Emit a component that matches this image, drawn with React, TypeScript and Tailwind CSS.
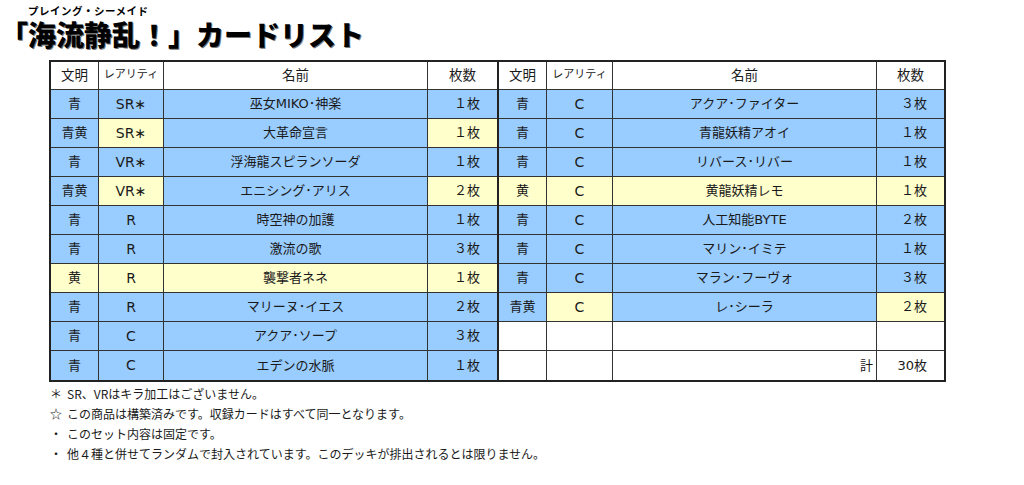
const BLUE = "bg-[#99ccff]";
const YELLOW = "bg-[#ffffcc]";

type Row = {
  civ: string;
  rarity: string;
  name: string;
  count: string;
  tone: "blue" | "yellow" | "mixed" | "none";
};

const leftRows: Row[] = [
  { civ: "青", rarity: "SR∗", name: "巫女MIKO･神楽", count: "１枚", tone: "blue" },
  { civ: "青黄", rarity: "SR∗", name: "大革命宣言", count: "１枚", tone: "mixed" },
  { civ: "青", rarity: "VR∗", name: "浮海龍スピランソーダ", count: "１枚", tone: "blue" },
  { civ: "青黄", rarity: "VR∗", name: "エニシング･アリス", count: "２枚", tone: "mixed" },
  { civ: "青", rarity: "R", name: "時空神の加護", count: "１枚", tone: "blue" },
  { civ: "青", rarity: "R", name: "激流の歌", count: "３枚", tone: "blue" },
  { civ: "黄", rarity: "R", name: "襲撃者ネネ", count: "１枚", tone: "yellow" },
  { civ: "青", rarity: "R", name: "マリーヌ･イエス", count: "２枚", tone: "blue" },
  { civ: "青", rarity: "C", name: "アクア･ソープ", count: "３枚", tone: "blue" },
  { civ: "青", rarity: "C", name: "エデンの水脈", count: "１枚", tone: "blue" },
];

const rightRows: Row[] = [
  { civ: "青", rarity: "C", name: "アクア･ファイター", count: "３枚", tone: "blue" },
  { civ: "青", rarity: "C", name: "青龍妖精アオイ", count: "１枚", tone: "blue" },
  { civ: "青", rarity: "C", name: "リバース･リバー", count: "１枚", tone: "blue" },
  { civ: "黄", rarity: "C", name: "黄龍妖精レモ", count: "１枚", tone: "yellow" },
  { civ: "青", rarity: "C", name: "人工知能BYTE", count: "２枚", tone: "blue" },
  { civ: "青", rarity: "C", name: "マリン･イミテ", count: "１枚", tone: "blue" },
  { civ: "青", rarity: "C", name: "マラン･フーヴォ", count: "３枚", tone: "blue" },
  { civ: "青黄", rarity: "C", name: "レ･シーラ", count: "２枚", tone: "mixed" },
  { civ: "", rarity: "", name: "", count: "", tone: "none" },
  { civ: "", rarity: "", name: "計", count: "30枚", tone: "none" },
];

const cellBase = "flex items-center border-[#333]";

const toneFor = (tone: Row["tone"], col: number) => {
  if (tone === "none") return "bg-white";
  if (tone === "blue") return BLUE;
  if (tone === "yellow") return YELLOW;
  // mixed: rarity and count are yellow
  return col === 1 || col === 3 ? YELLOW : BLUE;
};

const Half = ({ rows, cols, left }: { rows: Row[]; cols: string; left?: boolean }) => (
  <div className={`grid ${cols} ${left ? "border-r-2 border-[#222]" : ""}`}>
    {["文明", "レアリティ", "名前", "枚数"].map((h, i) => (
      <div
        key={h}
        className={`${cellBase} h-[28px] justify-center border-b bg-white ${i < 3 ? "border-r" : ""} ${
          i === 1 ? "text-[11px]" : "text-[13.5px]"
        }`}
      >
        {h}
      </div>
    ))}
    {rows.map((r, ri) => {
      const last = ri === rows.length - 1;
      const b = last ? "" : "border-b";
      return [
        <div key={`${ri}a`} className={`${cellBase} h-[29px] justify-center border-r ${b} ${toneFor(r.tone, 0)}`}>
          {r.civ}
        </div>,
        <div
          key={`${ri}b`}
          className={`${cellBase} h-[29px] justify-center border-r text-[14px] ${b} ${toneFor(r.tone, 1)}`}
        >
          {r.rarity}
        </div>,
        <div
          key={`${ri}c`}
          className={`${cellBase} h-[29px] border-r ${b} ${toneFor(r.tone, 2)} ${
            r.name === "計" ? "justify-end pr-[3px]" : "justify-center"
          }`}
        >
          {r.name}
        </div>,
        <div key={`${ri}d`} className={`${cellBase} h-[29px] justify-end pr-[17px] ${b} ${toneFor(r.tone, 3)}`}>
          {r.count}
        </div>,
      ];
    })}
  </div>
);

const notes = [
  ["＊", "SR、VRはキラ加工はございません。"],
  ["☆", "この商品は構築済みです。収録カードはすべて同一となります。"],
  ["・", "このセット内容は固定です。"],
  ["・", "他４種と併せてランダムで封入されています。このデッキが排出されるとは限りません。"],
];

export default function App() {
  return (
    <div className="h-[485px] w-[1024px] overflow-hidden bg-white font-['Noto_Sans_CJK_JP',sans-serif] text-[#1a1a1a]">
      <div className="ml-[28px] pt-[5px] text-[10.5px] font-bold leading-[12px] tracking-[0.5px] text-black">
        プレイング・シーメイド
      </div>
      <h1 className="mt-[2px] text-[28px] font-black leading-[30px] text-black [text-shadow:1px_1px_0_#777]">
        「海流静乱！」カードリスト
      </h1>

      <div className="ml-[49px] mt-[11px] flex w-fit border-2 border-[#222] font-['DejaVu_Sans','Noto_Sans_CJK_JP',sans-serif] text-[13px]">
        <Half rows={leftRows} cols="grid-cols-[48px_65px_264px_69px]" left />
        <Half rows={rightRows} cols="grid-cols-[48px_66px_264px_67px]" />
      </div>

      <div className="ml-[50px] mt-[2px] text-[12px] leading-[20px]">
        {notes.map(([mark, text], i) => (
          <div key={i} className="flex">
            <span className="w-[17px]">{mark}</span>
            <span>{text}</span>
          </div>
        ))}
      </div>
    </div>
  );
}
